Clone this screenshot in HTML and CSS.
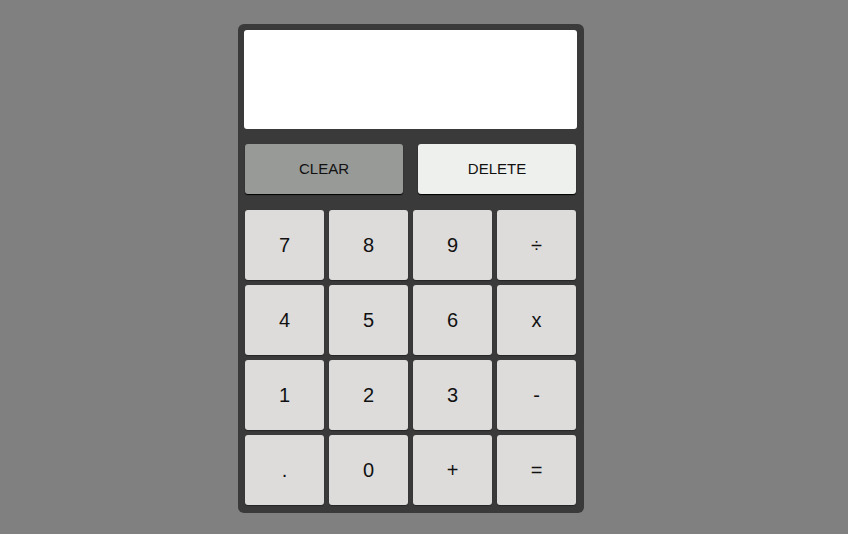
FILE: index.html
```html
<!DOCTYPE html>
<html>
<head>
<meta charset="utf-8">
<link rel="stylesheet" href="styles.css">
</head>
<body>
<div class="calc">
  <div class="display"></div>
  <div class="actions">
    <button class="btn clear">CLEAR</button>
    <button class="btn delete">DELETE</button>
  </div>
  <div class="keys">
    <button class="key">7</button>
    <button class="key">8</button>
    <button class="key">9</button>
    <button class="key">÷</button>
    <button class="key">4</button>
    <button class="key">5</button>
    <button class="key">6</button>
    <button class="key">x</button>
    <button class="key">1</button>
    <button class="key">2</button>
    <button class="key">3</button>
    <button class="key">-</button>
    <button class="key">.</button>
    <button class="key">0</button>
    <button class="key">+</button>
    <button class="key">=</button>
  </div>
</div>
</body>
</html>
```
FILE: styles.css
```css
html, body {
  margin: 0;
  padding: 0;
  background: #808080;
  font-family: "Liberation Sans", Arial, sans-serif;
}
body {
  padding: 24px 0 0 238px;
}
.calc {
  width: 346px;
  box-sizing: border-box;
  background: #3a3a3a;
  border-radius: 6px;
  padding: 6px 7px 8px 6px;
}
.display {
  height: 99px;
  background: #ffffff;
  border-radius: 3px;
}
.actions {
  display: flex;
  gap: 15px;
  margin: 15px 1px 0 1px;
}
.btn {
  width: 158px;
  height: 50px;
  box-sizing: border-box;
  border: none;
  border-radius: 3px;
  font-family: "Liberation Sans", Arial, sans-serif;
  font-size: 15px;
  color: #111;
  box-shadow: 0 1px 1px #000;
  padding: 0 0 2px 0;
}
.clear {
  background: #979a97;
}
.delete {
  background: #eef0ed;
}
.keys {
  display: grid;
  grid-template-columns: repeat(4, 79px);
  grid-auto-rows: 70px;
  column-gap: 5px;
  row-gap: 5px;
  margin: 16px 1px 0 1px;
}
.key {
  border: none;
  border-radius: 3px;
  background: #dddcdb;
  font-family: "Liberation Sans", Arial, sans-serif;
  font-size: 20px;
  color: #111;
  padding: 0;
  box-shadow: 0 1px 1px rgba(0, 0, 0, 0.35);
}
```
